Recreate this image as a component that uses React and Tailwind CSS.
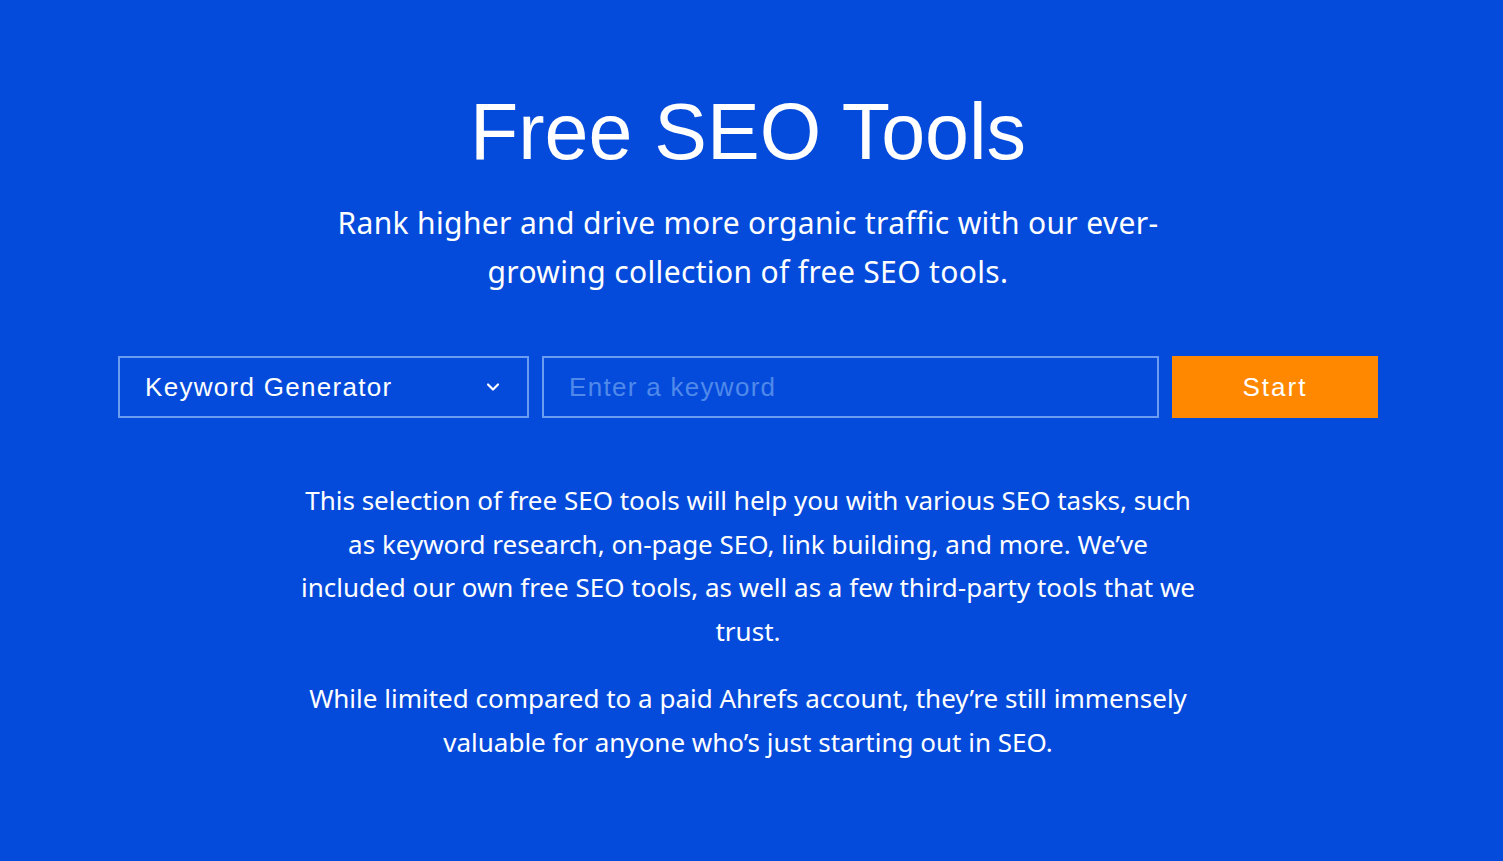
import React, { useState } from "react";

export default function App() {
  const [tool, setTool] = useState("Keyword Generator");
  const [keyword, setKeyword] = useState("");

  return (
    <div className="min-h-screen bg-[#054bdb] text-white pr-[7px]">
      <div className="max-w-[1260px] mx-auto pt-[88px] flex flex-col items-center">
        {/* Header */}
        <h1 className="text-[79px] leading-[88px] font-normal text-center [font-family:'Liberation_Sans',sans-serif]">
          Free SEO Tools
        </h1>
        <p className="mt-[22px] max-w-[850px] text-center text-[30px] tracking-[0.35px] leading-[49px] [font-family:'Noto_Sans',sans-serif]">
          Rank higher and drive more organic traffic with our ever-growing collection of free SEO tools.
        </p>

        {/* Search row */}
        <form
          onSubmit={(e) => e.preventDefault()}
          className="mt-[60px] w-full flex gap-[13px] [font-family:'Liberation_Sans',sans-serif]"
        >
          <div className="relative w-[411px] h-[62px] border-2 border-[#6b9cf1]">
            <select
              value={tool}
              onChange={(e) => setTool(e.target.value)}
              className="appearance-none w-full h-full bg-transparent pl-[25px] pr-12 text-[26px] tracking-[1.3px] text-white outline-none"
            >
              <option className="text-black">Keyword Generator</option>
              <option className="text-black">Backlink Checker</option>
              <option className="text-black">Website Authority Checker</option>
            </select>
            <svg
              className="absolute right-[24px] top-1/2 -translate-y-1/2 pointer-events-none"
              width="20"
              height="20"
              viewBox="0 0 24 24"
              fill="none"
              stroke="white"
              strokeWidth="2.6"
              strokeLinecap="round"
              strokeLinejoin="round"
            >
              <path d="M6 9l6 6 6-6" />
            </svg>
          </div>
          <input
            value={keyword}
            onChange={(e) => setKeyword(e.target.value)}
            placeholder="Enter a keyword"
            className="w-[617px] h-[62px] border-2 border-[#6b9cf1] bg-transparent px-[25px] text-[26px] tracking-[1.3px] text-white placeholder:text-[#4f89ea] outline-none"
          />
          <button
            type="submit"
            className="w-[206px] h-[62px] bg-[#ff8800] text-white text-[26px] tracking-[2px]"
          >
            Start
          </button>
        </form>

        {/* Description */}
        <div className="mt-[61px] max-w-[900px] text-center text-[26px] leading-[43.5px] [font-family:'Noto_Sans',sans-serif]">
          <p>
            This selection of free SEO tools will help you with various SEO tasks, such as keyword research, on-page SEO, link building, and more. We’ve included our own free SEO tools, as well as a few third-party tools that we trust.
          </p>
          <p className="mt-[24px]">
            While limited compared to a paid Ahrefs account, they’re still immensely valuable for anyone who’s just starting out in SEO.
          </p>
        </div>
      </div>
    </div>
  );
}
